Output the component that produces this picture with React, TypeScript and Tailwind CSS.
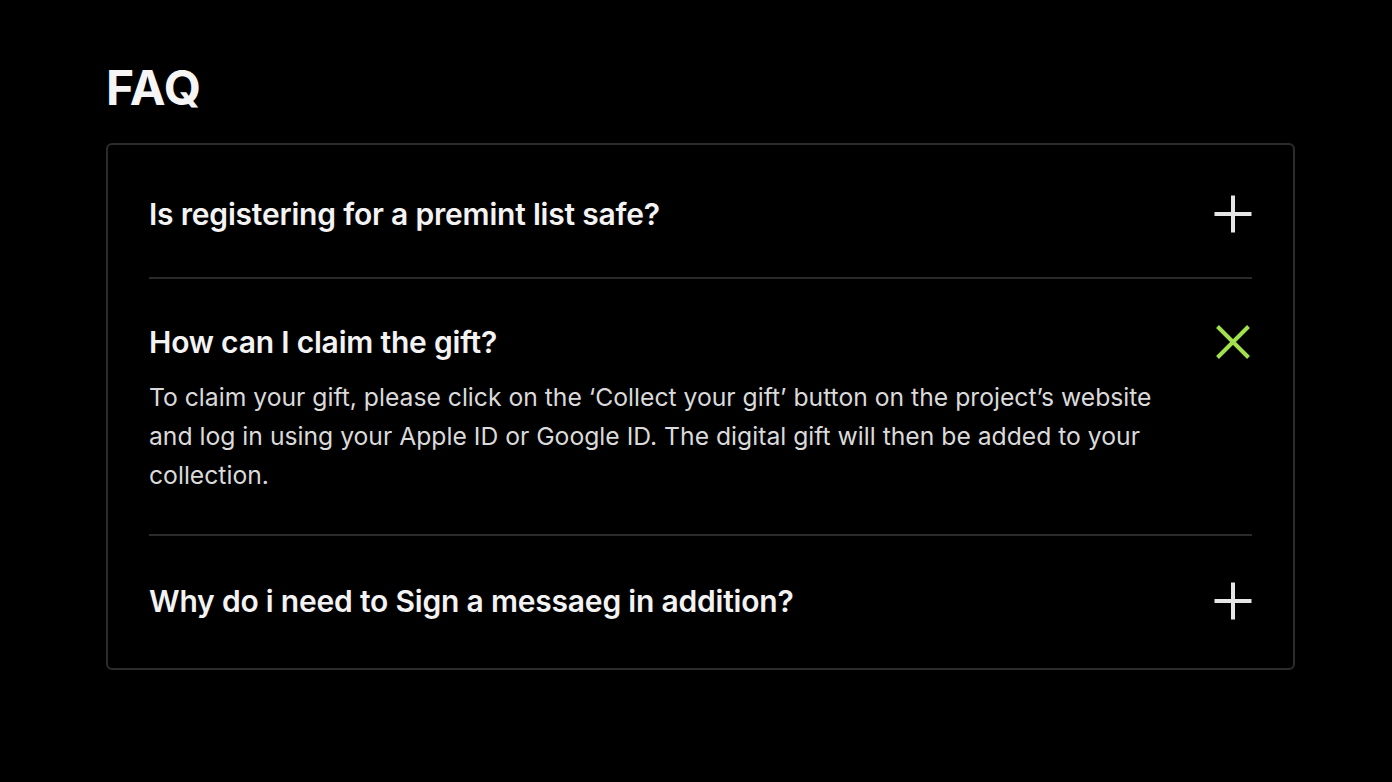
import { useState } from 'react';

interface FaqItem {
  id: string;
  question: string;
  answer: string;
}

const items: FaqItem[] = [
  {
    id: 'safe',
    question: 'Is registering for a premint list safe?',
    answer: 'Registering for a premint list is safe. We never ask for your seed phrase or private keys.',
  },
  {
    id: 'gift',
    question: 'How can I claim the gift?',
    answer:
      'To claim your gift, please click on the \u2018Collect your gift\u2019 button on the project\u2019s website and log in using your Apple ID or Google ID. The digital gift will then be added to your collection.',
  },
  {
    id: 'sign',
    question: 'Why do i need to Sign a messaeg in addition?',
    answer: 'Signing a message proves that you own the wallet. It does not cost any gas.',
  },
];

function PlusIcon() {
  return (
    <svg width="40" height="40" viewBox="0 0 40 40" className="text-[#e6e6e6]">
      <path d="M20 1.5v37M1.5 20h37" stroke="currentColor" strokeWidth="4" />
    </svg>
  );
}

function CloseIcon() {
  return (
    <svg width="40" height="40" viewBox="0 0 40 40" className="text-[#a2e04e]">
      <path d="M4.5 4.5l31 31M35.5 4.5l-31 31" stroke="currentColor" strokeWidth="4" />
    </svg>
  );
}

export default function App() {
  const [openId, setOpenId] = useState<string | null>('gift');

  return (
    <div
      className="min-h-[782px] w-full bg-black pl-[106px] pr-[97px] pt-[62px] text-white"
      style={{ fontFamily: 'Inter, "Noto Sans", sans-serif' }}
    >
      <h1 className="text-[48px] font-bold leading-[52px] text-[#f5f5f5]">FAQ</h1>

      <div className="mt-[29px] rounded-md border-2 border-[#2c2c2c] px-[41px] py-[4px]">
        {items.map((item, index) => {
          const isOpen = openId === item.id;
          return (
            <div
              key={item.id}
              className={index < items.length - 1 ? 'border-b-2 border-[#2a2a2a]' : ''}
            >
              <button
                onClick={() => setOpenId(isOpen ? null : item.id)}
                className={`flex w-full items-center justify-between pb-[43px] text-left ${
                  isOpen ? 'pt-[43px]' : 'pt-[45px]'
                }`}
              >
                <span className="text-[30px] font-semibold leading-[36px] tracking-[-0.2px] text-[#f3f3f3]">
                  {item.question}
                </span>
                <span className="-mr-[1px]">{isOpen ? <CloseIcon /> : <PlusIcon />}</span>
              </button>
              {isOpen && (
                <p className="-mt-[27px] mb-[39px] max-w-[1020px] text-[24.7px] font-normal leading-[39px] text-[#dadada]">
                  {item.answer}
                </p>
              )}
            </div>
          );
        })}
      </div>
    </div>
  );
}
